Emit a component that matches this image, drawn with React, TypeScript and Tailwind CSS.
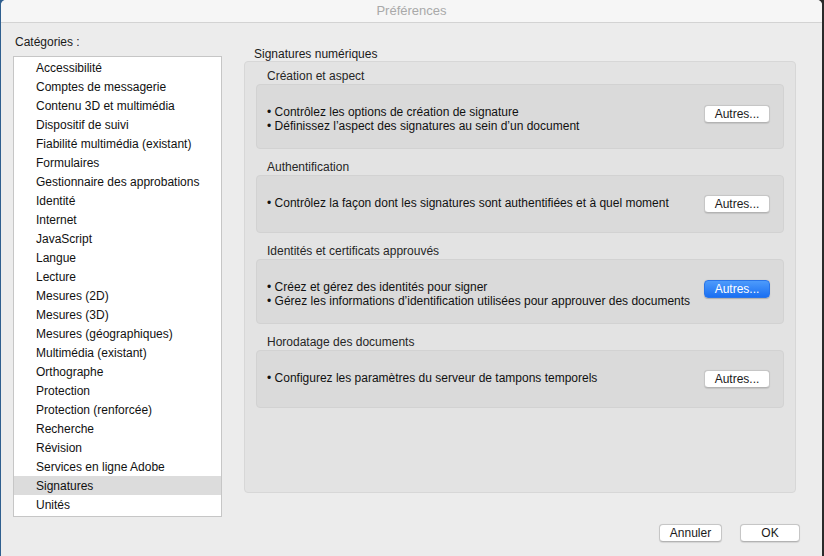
import React from "react";

const cats = [
  "Accessibilité",
  "Comptes de messagerie",
  "Contenu 3D et multimédia",
  "Dispositif de suivi",
  "Fiabilité multimédia (existant)",
  "Formulaires",
  "Gestionnaire des approbations",
  "Identité",
  "Internet",
  "JavaScript",
  "Langue",
  "Lecture",
  "Mesures (2D)",
  "Mesures (3D)",
  "Mesures (géographiques)",
  "Multimédia (existant)",
  "Orthographe",
  "Protection",
  "Protection (renforcée)",
  "Recherche",
  "Révision",
  "Services en ligne Adobe",
  "Signatures",
  "Unités",
];

function Btn({ label, primary, w }: { label: string; primary?: boolean; w: string }) {
  return (
    <div
      className={
        primary
          ? `${w} h-[18px] rounded-[4px] bg-[linear-gradient(#4d9bfb,#1a6ff2)] border border-[#2a75e8] text-white flex items-center justify-center text-[12px] leading-none shadow-[0_0.5px_1px_rgba(0,0,0,0.2)]`
          : `${w} h-[18px] rounded-[4px] bg-white border border-[#c6c6c6] border-b-[#b3b3b3] text-[#1a1a1a] flex items-center justify-center text-[12px] leading-none shadow-[0_0.5px_1px_rgba(0,0,0,0.1)]`
      }
    >
      {label}
    </div>
  );
}

function Section({
  title,
  lines,
  primary,
  first,
}: {
  title: string;
  lines: string[];
  primary?: boolean;
  first?: boolean;
}) {
  const two = lines.length > 1;
  return (
    <div className={first ? "" : "mt-[12px]"}>
      <div className="h-[14px] pl-[11px] text-[12px] leading-[12px] text-[#262626]">{title}</div>
      <div
        className={`${two ? "h-[65px]" : "h-[58px]"} rounded-[4px] bg-[#dadada] border border-[#d2d2d2] flex items-center pl-[10px] pr-[13px]`}
      >
        <div className={`flex-1 text-[12px] leading-[14px] text-[#111] ${two ? "mt-[5px]" : "-mt-[2px]"}`}>
          {lines.map((l) => (
            <div key={l}>• {l}</div>
          ))}
        </div>
        <div className={two ? "mb-[6px]" : ""}>
          <Btn label="Autres..." primary={primary} w="w-[66px]" />
        </div>
      </div>
    </div>
  );
}

export default function App() {
  return (
    <div
      className="w-[824px] h-[556px] flex bg-[linear-gradient(90deg,#2f5f8f_0%,#2f5f8f_50%,#2a2a2a_50%,#2a2a2a_100%)] overflow-hidden"
      style={{ fontFamily: '"Liberation Sans", Arial, sans-serif' }}
    >
      <div className="ml-[1px] w-[821px] h-[556px] rounded-t-[5px] bg-[#ececec] flex flex-col overflow-hidden">
        <div className="h-[23px] bg-[#f6f6f6] border-b border-[#d3d3d3] flex items-center justify-center text-[13px] text-[#a9a9a9]">
          Préférences
        </div>
        <div className="flex">
          <div className="pl-[12px] pt-[12px] flex flex-col">
            <div className="pl-[2px] text-[12px] leading-[14px] text-[#1a1a1a]">Catégories :</div>
            <div className="mt-[7px] w-[209px] h-[461px] border border-[#c6c6c6] bg-white pt-px">
              {cats.map((c) => (
                <div
                  key={c}
                  className={`h-[19px] pl-[22px] flex items-center text-[12px] text-[#111] ${
                    c === "Signatures" ? "bg-[#dcdcdc]" : ""
                  }`}
                >
                  {c}
                </div>
              ))}
            </div>
          </div>
          <div className="ml-[22px] pt-[24px] flex flex-col">
            <div className="pl-[10px] h-[14px] text-[12px] leading-[14px] text-[#1a1a1a]">Signatures numériques</div>
            <div className="w-[552px] h-[432px] rounded-[4px] bg-[#e3e3e3] border border-[#d7d7d7] px-[11px] pt-[8px]">
              <Section
                first
                title="Création et aspect"
                lines={[
                  "Contrôlez les options de création de signature",
                  "Définissez l’aspect des signatures au sein d’un document",
                ]}
              />
              <Section
                title="Authentification"
                lines={["Contrôlez la façon dont les signatures sont authentifiées et à quel moment"]}
              />
              <Section
                title="Identités et certificats approuvés"
                primary
                lines={[
                  "Créez et gérez des identités pour signer",
                  "Gérez les informations d’identification utilisées pour approuver des documents",
                ]}
              />
              <Section
                title="Horodatage des documents"
                lines={["Configurez les paramètres du serveur de tampons temporels"]}
              />
            </div>
          </div>
        </div>
        <div className="mt-[7px] flex justify-end pr-[22px] gap-[18px]">
          <Btn label="Annuler" w="w-[63px]" />
          <Btn label="OK" w="w-[60px]" />
        </div>
      </div>
    </div>
  );
}
